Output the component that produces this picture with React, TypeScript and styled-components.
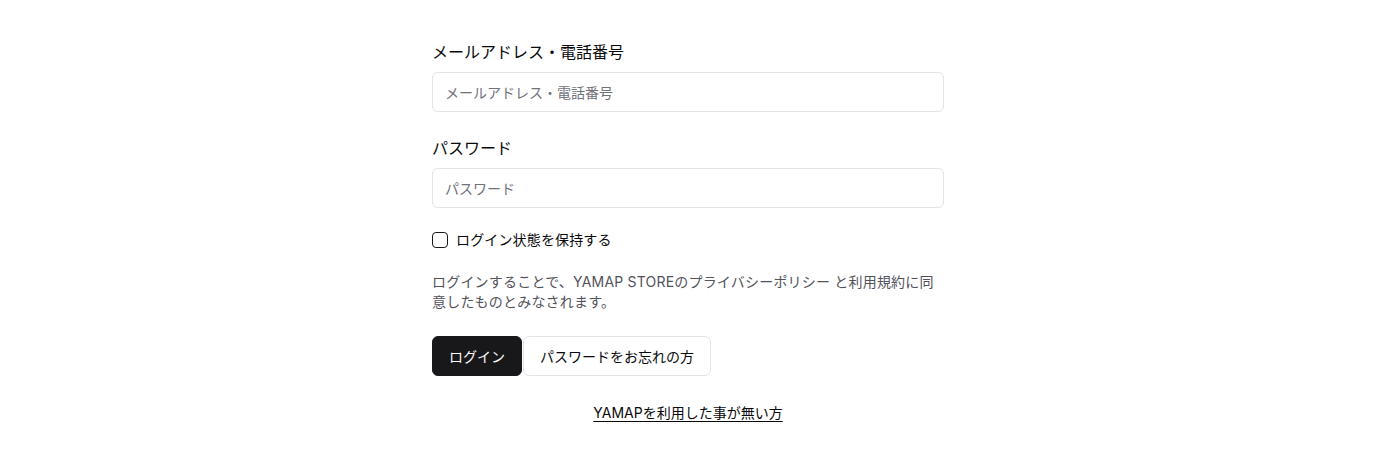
import React from "react";
import styled, { createGlobalStyle } from "styled-components";

const Global = createGlobalStyle`
  html, body { margin: 0; padding: 0; background: #ffffff; }
  body {
    font-family: Inter, "Noto Sans CJK JP", sans-serif;
    color: #09090b;
  }
  * { box-sizing: border-box; }
`;

const Page = styled.div`
  display: flex;
  justify-content: center;
  padding-top: 40px;
`;

const Form = styled.form`
  width: 512px;
  display: flex;
  flex-direction: column;
`;

const Field = styled.div`
  display: flex;
  flex-direction: column;
  gap: 8px;
  margin-bottom: 24px;
`;

const Label = styled.label`
  font-size: 16px;
  line-height: 24px;
  color: #09090b;
`;

const Input = styled.input`
  height: 40px;
  width: 100%;
  border: 1px solid #e4e4e7;
  border-radius: 6px;
  padding: 0 12px;
  font-family: inherit;
  font-size: 14px;
  color: #09090b;
  background: #fff;
  outline: none;
  &::placeholder { color: #71717a; }
`;

const CheckRow = styled.label`
  display: flex;
  align-items: center;
  gap: 8px;
  font-size: 14px;
  line-height: 20px;
  letter-spacing: 0.15px;
  margin-top: -2px;
`;

const Box = styled.span`
  width: 16px;
  height: 16px;
  border: 1px solid #18181b;
  border-radius: 4px;
  display: inline-block;
`;

const Note = styled.p`
  margin: 22px 0 0;
  font-size: 14px;
  line-height: 20px;
  letter-spacing: 0.2px;
  color: #52525b;
`;

const Buttons = styled.div`
  display: flex;
  gap: 1px;
  margin-top: 24px;
`;

const Button = styled.button<{ $primary?: boolean }>`
  height: 40px;
  padding: 0 16px;
  border-radius: 6px;
  font-family: inherit;
  font-size: 14px;
  cursor: pointer;
  border: 1px solid ${(p) => (p.$primary ? "#18181b" : "#e4e4e7")};
  background: ${(p) => (p.$primary ? "#18181b" : "#ffffff")};
  color: ${(p) => (p.$primary ? "#fafafa" : "#09090b")};
`;

const LinkRow = styled.div`
  display: flex;
  justify-content: center;
  margin-top: 27px;
`;

const Link = styled.a`
  font-size: 14px;
  line-height: 20px;
  color: #09090b;
  text-decoration: underline;
  text-underline-offset: 3px;
`;

export default function App() {
  return (
    <>
      <Global />
      <Page>
        <Form onSubmit={(e) => e.preventDefault()}>
          <Field>
            <Label>メールアドレス・電話番号</Label>
            <Input placeholder="メールアドレス・電話番号" />
          </Field>
          <Field>
            <Label>パスワード</Label>
            <Input type="password" placeholder="パスワード" />
          </Field>
          <CheckRow>
            <Box />
            ログイン状態を保持する
          </CheckRow>
          <Note>
            ログインすることで、YAMAP STOREのプライバシーポリシー と利用規約に同意したものとみなされます。
          </Note>
          <Buttons>
            <Button $primary type="submit">ログイン</Button>
            <Button type="button">パスワードをお忘れの方</Button>
          </Buttons>
          <LinkRow>
            <Link href="#">YAMAPを利用した事が無い方</Link>
          </LinkRow>
        </Form>
      </Page>
    </>
  );
}
